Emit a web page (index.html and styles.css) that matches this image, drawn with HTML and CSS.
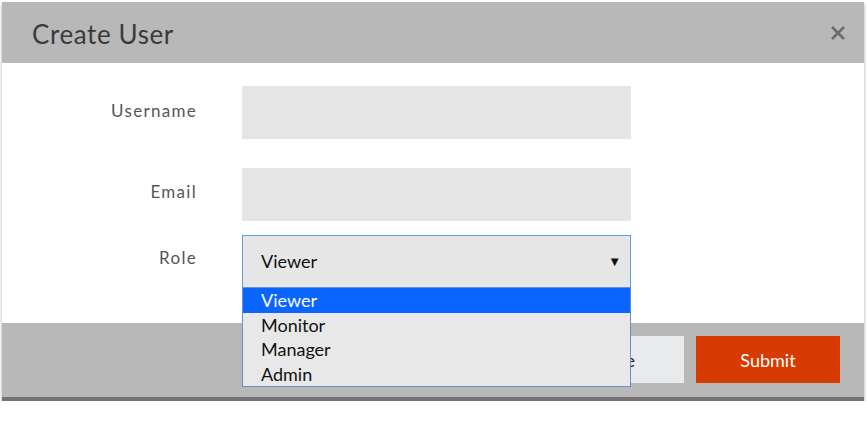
FILE: index.html
```html
<!DOCTYPE html>
<html>
<head>
<meta charset="utf-8">
<link rel="stylesheet" href="styles.css">
</head>
<body>
<div class="modal">
  <div class="modal-header">
    <h1 class="title">Create User</h1>
    <svg class="close" width="16" height="16" viewBox="0 0 16 16"><path d="M2 2 L14 14 M14 2 L2 14" stroke="#6b6b6b" stroke-width="2.6" stroke-linecap="butt"/></svg>
  </div>
  <div class="modal-body">
    <div class="row row-user">
      <label class="label">Username</label>
      <div class="input"></div>
    </div>
    <div class="row row-email">
      <label class="label">Email</label>
      <div class="input"></div>
    </div>
    <div class="row row-role">
      <label class="label">Role</label>
      <div class="select-wrap">
        <div class="select">
          <span>Viewer</span>
          <span class="arrow">&#9660;</span>
        </div>
        <ul class="options">
          <li class="option selected">Viewer</li>
          <li class="option">Monitor</li>
          <li class="option">Manager</li>
          <li class="option">Admin</li>
        </ul>
      </div>
    </div>
  </div>
  <div class="modal-footer">
    <button class="btn btn-cancel">Close</button>
    <button class="btn btn-submit">Submit</button>
  </div>
</div>
</body>
</html>
```
FILE: styles.css
```css
* { box-sizing: border-box; }
html, body { margin: 0; padding: 0; background: #fff; }
body { font-family: Lato, "Open Sans", sans-serif; padding-top: 2px; }

.modal {
  margin: 0 0 0 2px;
  width: 862px;
  box-shadow: 0 2px 3px rgba(0,0,0,0.35);
}

.modal-header {
  height: 61px;
  background: #b8b8b8;
  display: flex;
  align-items: center;
  justify-content: space-between;
  padding: 0 18px 0 30px;
}
.title {
  margin: 0;
  font-weight: 400;
  font-size: 26px;
  letter-spacing: 0.6px;
  color: #3b3b3b;
  padding-top: 2px;
}
.close { display: block; margin-top: 1px; }

.modal-body {
  background: #fff;
  height: 260px;
  padding-top: 23px;
}
.row {
  display: grid;
  grid-template-columns: 195px 389px;
  column-gap: 45px;
  align-items: center;
}
.row-email { margin-top: 29px; }
.row-role { margin-top: 14px; align-items: start; }
.label {
  text-align: right;
  font-size: 17px;
  letter-spacing: 1.3px;
  color: #555;
}
.row-user .label { margin-top: -4px; }
.row-email .label { margin-top: -6px; }
.row-role .label { margin-top: 12px; }

.input {
  height: 53px;
  background: #e5e5e5;
}

.select-wrap { position: relative; }
.select {
  height: 53px;
  background: #e6e6e6;
  border: 1px solid #5aa0e6;
  display: flex;
  align-items: center;
  justify-content: space-between;
  padding: 0 9px 2px 18px;
  font-size: 18px;
  color: #111;
}
.arrow { font-size: 13px; color: #111; }

.options {
  position: absolute;
  left: 0;
  top: 52px;
  width: 389px;
  margin: 0;
  padding: 0;
  list-style: none;
  background: #e8e8e8;
  border: 1px solid #6a8fd0;
  z-index: 2;
}
.option {
  height: 24.5px;
  line-height: 24px;
  padding-left: 18px;
  font-size: 18px;
  color: #111;
}
.option.selected {
  background: #0a66ff;
  color: #fff;
}

.modal-footer {
  height: 78px;
  background: #b8b8b8;
  border-bottom: 4px solid #747474;
  display: flex;
  justify-content: flex-end;
  align-items: flex-start;
  padding: 13px 24px 0 0;
  gap: 12px;
}
.btn {
  width: 144px;
  height: 47px;
  border: none;
  font-family: Lato, "Open Sans", sans-serif;
  font-size: 18px;
}
.btn-cancel { background: #e9eaeb; color: #222; width: 142px; }
.btn-submit { background: #d83b01; color: #fff; }
```
